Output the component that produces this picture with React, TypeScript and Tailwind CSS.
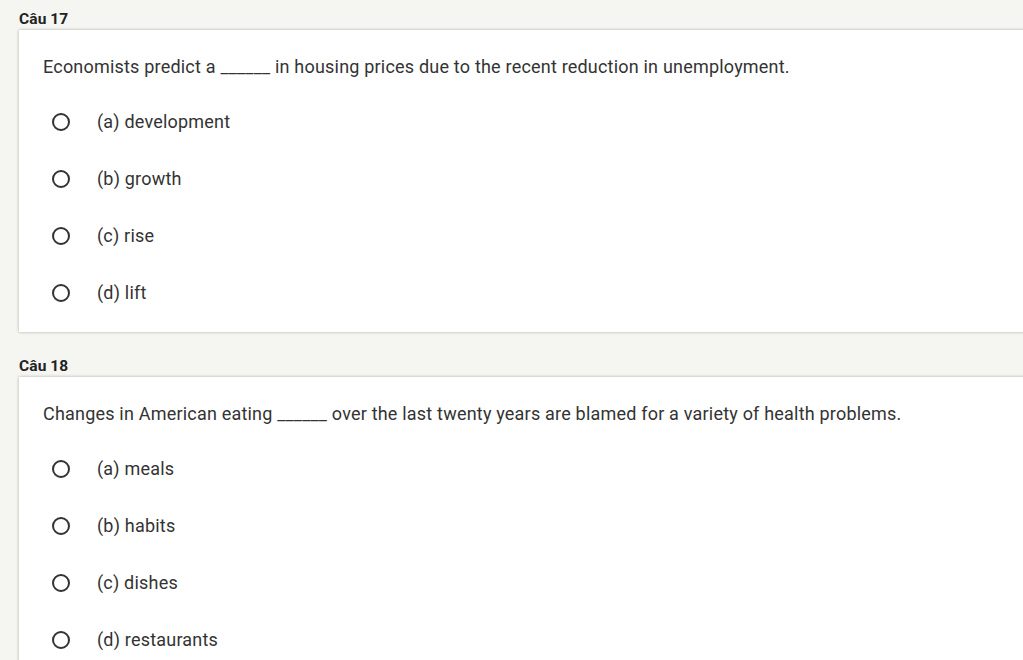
import React from "react";

type Question = {
	label: string;
	text: string;
	options: string[];
};

const questions: Question[] = [
	{
		label: "Câu 17",
		text: "Economists predict a ______ in housing prices due to the recent reduction in unemployment.",
		options: ["(a) development", "(b) growth", "(c) rise", "(d) lift"],
	},
	{
		label: "Câu 18",
		text: "Changes in American eating ______ over the last twenty years are blamed for a variety of health problems.",
		options: ["(a) meals", "(b) habits", "(c) dishes", "(d) restaurants"],
	},
];

const QuestionCard = ({ q, first }: { q: Question; first: boolean }) => {
	return (
		<div className={first ? "" : "mt-[22px]"}>
			<h2 className="pt-px text-[15.5px] leading-[22px] font-bold text-[#222] tracking-[0.1px]">{q.label}</h2>
			<div className="w-[1100px] bg-white shadow-[0_0_3px_rgba(0,0,0,0.3)] pt-[25px] pb-[11px] pl-[24px]">
				<p className="text-[18px] leading-[24px] tracking-[0.2px] text-[#333] mb-[14px]">{q.text}</p>
				{q.options.map((opt) => (
					<label key={opt} className="h-[57px] flex items-center pl-[9px]">
						<span className="w-[18px] h-[18px] rounded-full border-2 border-[#333] shrink-0" />
						<span className="ml-[27px] text-[18px] leading-[24px] tracking-[0.2px] text-[#333]">{opt}</span>
					</label>
				))}
			</div>
		</div>
	);
};

export default function App() {
	return (
		<div
			className="w-[1023px] h-[660px] overflow-hidden bg-[#f5f5f1] pl-[19px] pt-[7px]"
			style={{ fontFamily: "Roboto, 'Liberation Sans', sans-serif" }}
		>
			{questions.map((q, i) => (
				<QuestionCard key={q.label} q={q} first={i === 0} />
			))}
		</div>
	);
}
